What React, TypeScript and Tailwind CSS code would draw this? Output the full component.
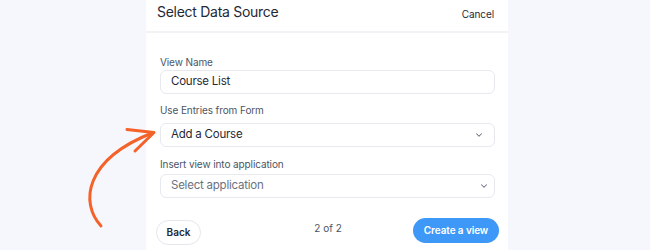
import { ChevronDown } from "lucide-react";

function Label({ children }: { children: React.ReactNode }) {
  return <div className="text-[10px] leading-[12px] tracking-[-0.01em] text-[#4b5563]">{children}</div>;
}

export default function App() {
  return (
    <div
      className="relative w-[650px] h-[250px] overflow-hidden bg-[#f6f7fc]"
      style={{ fontFamily: "Inter, 'Noto Sans', sans-serif" }}
    >
      {/* hand-drawn arrow pointing at the form select */}
      <svg className="absolute left-0 top-0" width="650" height="250" fill="none">
        <path
          d="M101 226 C 80 203 84 160 152 133"
          stroke="#f4622a"
          strokeWidth="3"
          strokeLinecap="round"
        />
        <path
          d="M127 129.5 L154 132.5 L135 151"
          stroke="#f4622a"
          strokeWidth="3"
          strokeLinecap="round"
          strokeLinejoin="round"
        />
      </svg>

      <div className="ml-[146px] w-[362px] h-[250px] bg-white flex flex-col">
        {/* header */}
        <div className="h-[33px] shrink-0 flex items-start justify-between px-[10px] pt-[3px] border-b-2 border-[#f2f3f7]">
          <span className="text-[14px] leading-[18px] tracking-[-0.02em] text-[#1f2937] pl-[1px]">Select Data Source</span>
          <span className="text-[10px] leading-[18px] mt-[2px] tracking-[-0.01em] text-[#1f2937] pr-[4px]">Cancel</span>
        </div>

        {/* body */}
        <div className="flex flex-col pl-[14px] pr-[13px] pt-[23px]">
          <Label>View Name</Label>
          <div className="mt-[2px] h-[24px] rounded-[6px] border border-[#e7e9ee] flex items-center px-[10px] text-[11.5px] tracking-[-0.02em] text-[#1f2937]">
            Course List
          </div>

          <div className="mt-[10px]">
            <Label>Use Entries from Form</Label>
          </div>
          <div className="mt-[7px] h-[24px] rounded-[6px] border border-[#e7e9ee] flex items-center justify-between pl-[10px] pr-[10px] text-[11.5px] tracking-[-0.02em] text-[#1f2937]">
            <span>Add a Course</span>
            <ChevronDown size={10} strokeWidth={2.5} className="text-[#6b7280]" />
          </div>

          <div className="mt-[11px]">
            <Label>Insert view into application</Label>
          </div>
          <div className="mt-[4px] h-[24px] rounded-[6px] border border-[#e7e9ee] flex items-center justify-between pl-[10px] pr-[5px] text-[11.5px] tracking-[-0.02em] text-[#6b7280]">
            <span>Select application</span>
            <ChevronDown size={10} strokeWidth={2.5} className="text-[#6b7280]" />
          </div>
        </div>

        {/* footer */}
        <div className="mt-[20px] grid grid-cols-3 items-start pl-[10px] pr-[9px]">
          <div>
            <button className="h-[25px] w-[45px] rounded-full border border-[#e5e7eb] text-[10px] font-semibold text-[#1f2937]">
              Back
            </button>
          </div>
          <span className="text-center text-[10px] leading-[16px] mt-[2px] pl-[1px] text-[#4b5563]">2 of 2</span>
          <div className="flex justify-end">
            <button className="h-[25px] w-[86px] rounded-full bg-[#3d98f7] text-[10px] font-semibold tracking-[-0.01em] text-white">
              Create a view
            </button>
          </div>
        </div>
      </div>
    </div>
  );
}
